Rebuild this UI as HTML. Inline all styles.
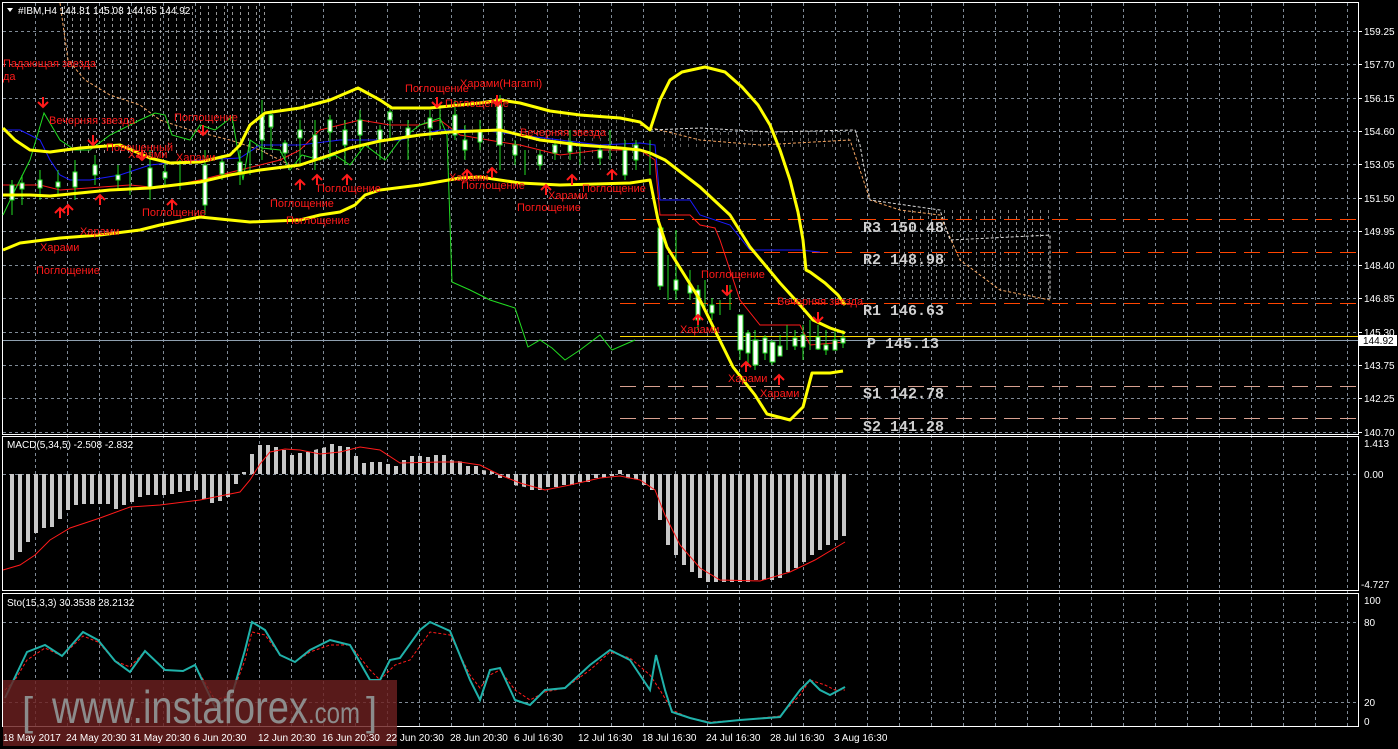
<!DOCTYPE html>
<html><head><meta charset="utf-8"><style>
html,body{margin:0;padding:0;background:#000;width:1398px;height:749px;overflow:hidden}
svg{display:block}
</style></head><body>
<svg width="1398" height="749" viewBox="0 0 1398 749" xmlns="http://www.w3.org/2000/svg" font-family="Liberation Sans, sans-serif">
<defs>
<pattern id="bars" x="10" y="0" width="8" height="749" patternUnits="userSpaceOnUse">
<rect x="0" y="0" width="4" height="749" fill="#c8c8c8"/>
</pattern>
<pattern id="vd" x="0" y="0" width="8" height="6" patternUnits="userSpaceOnUse">
<rect x="0" y="0" width="1" height="3" fill="#bdbdbd"/>
</pattern>
</defs>
<rect width="1398" height="749" fill="#000"/>
<g stroke="#7f8a96" stroke-width="1" stroke-dasharray="3,3">
<path d="M35.5 3V727M67.5 3V727M99.5 3V727M131.5 3V727M163.5 3V727M195.5 3V727M227.5 3V727M259.5 3V727M291.5 3V727M323.5 3V727M355.5 3V727M387.5 3V727M419.5 3V727M451.5 3V727M483.5 3V727M515.5 3V727M547.5 3V727M579.5 3V727M611.5 3V727M643.5 3V727M675.5 3V727M707.5 3V727M739.5 3V727M771.5 3V727M803.5 3V727M835.5 3V727M867.5 3V727M899.5 3V727M931.5 3V727M963.5 3V727M995.5 3V727M1027.5 3V727M1059.5 3V727M1091.5 3V727M1123.5 3V727M1155.5 3V727M1187.5 3V727M1219.5 3V727M1251.5 3V727M1283.5 3V727M1315.5 3V727M1347.5 3V727"/>
<path d="M3 31.5H1358M3 64.5H1358M3 98.5H1358M3 131.5H1358M3 164.5H1358M3 198.5H1358M3 231.5H1358M3 265.5H1358M3 298.5H1358M3 332.5H1358M3 365.5H1358M3 398.5H1358M3 432.5H1358"/>
<path d="M3 474.5H1358M3 622.5H1358M3 702.5H1358"/>
</g>
<g fill="none" stroke="#fff" stroke-width="1">
<rect x="2.5" y="2.5" width="1356" height="432"/>
<rect x="2.5" y="436.5" width="1356" height="154"/>
<rect x="2.5" y="593.5" width="1356" height="133"/>
</g>
<rect x="60" y="3" width="210" height="150" fill="url(#vd)" opacity="0.8"/>
<rect x="270" y="90" width="120" height="80" fill="url(#vd)" opacity="0.6"/>
<rect x="380" y="110" width="260" height="60" fill="url(#vd)" opacity="0.5"/>
<rect x="660" y="130" width="200" height="20" fill="url(#vd)" opacity="0.5"/>
<rect x="900" y="210" width="150" height="90" fill="url(#vd)" opacity="0.7"/>
<path d="M60 3 L68 60 L85 80 L110 95 L140 105 L160 120 L190 130 L230 140 L260 150 L300 170 M640 125 L700 140 L760 145 L850 140 L860 170 L870 200 L900 210 L940 215 L960 260 L1000 290 L1050 300" fill="none" stroke="#f4a460" stroke-width="1" stroke-dasharray="3,2"/>
<path d="M650 130 L700 128 L770 132 L855 130 L860 145 L870 200 L940 210 L950 240 L1050 235 L1050 300" fill="none" stroke="#ddd" stroke-width="1" stroke-dasharray="3,2"/>
<g stroke="#ff4500" stroke-width="1" stroke-dasharray="16,8">
<path d="M620 219.5H1358M620 252.5H1358M620 303.5H1358"/>
</g>
<g stroke="#d8a090" stroke-width="1" stroke-dasharray="16,8">
<path d="M620 386.5H1358M620 418.5H1358"/>
</g>
<path d="M620 336.5H1358" stroke="#ffd700" stroke-width="1"/>
<path d="M3 340.5H1358" stroke="#8fa0b0" stroke-width="1"/>
<g style="font-family:'Liberation Mono',monospace;font-size:15px;font-weight:bold" fill="#d0d0d0">
<text x="863" y="232">R3 150.48</text>
<text x="863" y="264">R2 148.98</text>
<text x="863" y="315">R1 146.63</text>
<text x="867" y="348">P 145.13</text>
<text x="863" y="398">S1 142.78</text>
<text x="863" y="431">S2 141.28</text>
</g>
<path d="M3 185 L40 185 L60 190 L130 185 L160 188 L200 180 L240 170 L280 160 L300 150 L320 130 L340 125 L360 120 L390 125 L420 125 L440 120 L460 135 L500 142 L520 145 L560 155 L600 150 L640 150 L655 160 L660 215 L690 215 L700 225 L715 228 L720 240 L730 270 L740 300 L760 325 L800 325 L810 345 L845 342" fill="none" stroke="#ff1a1a" stroke-width="1"/>
<path d="M3 130 L20 130 L40 140 L50 160 L60 175 L70 180 L90 180 L120 175 L150 165 L200 160 L240 158 L260 145 L300 145 L340 140 L400 140 L440 130 L480 130 L520 135 L560 140 L600 145 L640 143 L655 145 L660 200 L690 200 L700 215 L730 225 L750 250 L800 250 L820 252" fill="none" stroke="#1a1aff" stroke-width="1"/>
<path d="M3 215 L15 190 L30 160 L44 113 L60 140 L75 150 L90 150 L110 135 L130 125 L140 120 L155 113 L165 115 L172 135 L190 140 L200 125 L215 130 L232 117 L243 180 L250 140 L262 148 L280 150 L290 170 L302 155 L320 160 L335 155 L350 165 L365 145 L385 160 L400 140 L420 125 L440 118 L447 135 L452 282 L470 290 L490 300 L515 308 L528 347 L540 340 L552 348 L565 360 L580 350 L600 335 L612 350 L635 340" fill="none" stroke="#22dd22" stroke-width="1"/>
<g stroke="#22dd22" stroke-width="1" fill="#fff">
<path d="M12 180V215M22 175V205M40 170V200M58 170V195M75 160V200M95 155V185M118 165V190M130 165V195M150 150V200M165 160V185M180 160V190M205 150V215M222 155V180M240 150V185M250 140V175M262 100V160M271 110V150M285 140V160M300 120V165M315 120V170M330 115V160M345 120V165M360 110V150M380 125V160M390 105V140M408 120V160M430 110V140M440 105V130M455 100V140M465 125V160M480 120V150M500 95V170M515 140V165M525 150V175M540 150V170M555 140V160M570 130V160M580 145V165M600 145V165M610 130V160M625 140V180M636 140V170M650 140V175M660 225V290M668 255V300M676 230V300M690 270V300M698 285V330M705 280V310M712 298V320M720 300V315M730 285V310M740 315V360M748 330V365M755 330V370M765 335V360M772 340V365M780 335V355M787 325V350M795 330V350M803 325V360M810 320V350M818 325V350M826 330V355M835 330V350M843 330V348"/>
<rect x="10" y="185" width="4" height="15"/><rect x="20" y="183" width="4" height="6"/><rect x="38" y="180" width="4" height="8"/><rect x="56" y="182" width="4" height="5"/><rect x="73" y="172" width="4" height="15"/><rect x="93" y="165" width="4" height="10"/><rect x="116" y="175" width="4" height="5"/><rect x="148" y="168" width="4" height="20"/><rect x="163" y="172" width="4" height="6"/><rect x="203" y="165" width="4" height="40"/><rect x="220" y="162" width="4" height="12"/><rect x="238" y="162" width="4" height="10"/><rect x="260" y="115" width="4" height="25"/><rect x="269" y="115" width="4" height="12"/><rect x="283" y="143" width="4" height="10"/><rect x="298" y="130" width="4" height="8"/><rect x="313" y="135" width="4" height="25"/><rect x="328" y="120" width="4" height="12"/><rect x="343" y="130" width="4" height="15"/><rect x="358" y="120" width="4" height="15"/><rect x="378" y="130" width="4" height="10"/><rect x="388" y="112" width="4" height="8"/><rect x="406" y="128" width="4" height="8"/><rect x="428" y="118" width="4" height="10"/><rect x="453" y="115" width="4" height="20"/><rect x="463" y="140" width="4" height="10"/><rect x="478" y="130" width="4" height="12"/><rect x="497" y="105" width="5" height="40"/><rect x="513" y="145" width="4" height="10"/><rect x="538" y="155" width="4" height="10"/><rect x="553" y="145" width="4" height="8"/><rect x="568" y="142" width="4" height="10"/><rect x="598" y="150" width="4" height="8"/><rect x="623" y="150" width="4" height="25"/><rect x="634" y="145" width="4" height="15"/><rect x="658" y="228" width="5" height="58"/><rect x="674" y="280" width="4" height="10"/><rect x="688" y="285" width="4" height="8"/><rect x="696" y="290" width="4" height="30"/><rect x="710" y="305" width="4" height="8"/><rect x="738" y="315" width="5" height="35"/><rect x="746" y="333" width="4" height="20"/><rect x="753" y="340" width="5" height="25"/><rect x="763" y="338" width="4" height="15"/><rect x="770" y="342" width="5" height="20"/><rect x="778" y="346" width="4" height="10"/><rect x="793" y="338" width="4" height="8"/><rect x="801" y="335" width="4" height="12"/><rect x="816" y="337" width="4" height="12"/><rect x="824" y="345" width="4" height="5"/><rect x="833" y="340" width="4" height="10"/><rect x="841" y="338" width="4" height="5"/>
</g>
<g fill="none" stroke="#ffff00" stroke-width="3" stroke-linejoin="round">
<path d="M3 128 L15 140 L30 150 L50 152 L80 148 L120 145 L150 158 L170 163 L200 162 L230 155 L240 145 L250 125 L265 113 L300 108 L330 100 L358 88 L380 100 L392 108 L430 108 L480 103 L500 100 L520 103 L550 111 L580 115 L620 118 L640 122 L650 130 L660 100 L670 80 L682 72 L705 67 L725 72 L742 87 L758 105 L770 125 L780 150 L790 180 L798 212 L803 240 L806 270 L810 272 L825 283 L838 295 L845 305"/>
<path d="M650 153 L665 160 L700 187 L730 215 L750 247 L780 283 L800 305 L813 320 L830 328 L845 333"/>
<path d="M3 195 L30 195 L50 196 L80 193 L110 190 L150 188 L200 182 L230 175 L260 170 L300 165 L330 155 L350 148 L380 141 L420 135 L450 132 L500 130 L540 140 L580 145 L620 148 L640 150 L650 153"/>
<path d="M3 250 L20 243 L60 238 L100 235 L140 230 L160 225 L200 217 L250 222 L300 220 L320 215 L340 212 L355 205 L365 195 L380 190 L420 185 L460 178 L480 177 L520 183 L560 185 L630 183 L650 180 L658 220 L667 247 L700 300 L733 367 L755 395 L767 414 L790 420 L803 407 L812 373 L830 373 L843 371"/>
</g>
<g stroke="#ff1a1a" stroke-width="2" fill="none">
<path d="M43 97V107M38 102L43 107L48 102 M203 125V135M198 130L203 135L208 130 M437 97V107M432 102L437 107L442 102 M497 95V105M492 100L497 105L502 100 M727 285V295M722 290L727 295L732 290 M818 312V322M813 317L818 322L823 317 M142 150V160M137 155L142 160L147 155 M93 135V145M88 140L93 145L98 140"/>
<path d="M60 218V208M55 213L60 208L65 213 M68 215V205M63 210L68 205L73 210 M100 205V195M95 200L100 195L105 200 M172 210V200M167 205L172 200L177 205 M300 190V180M295 185L300 180L305 185 M317 185V175M312 180L317 175L322 180 M347 185V175M342 180L347 175L352 180 M467 180V170M462 175L467 170L472 175 M492 178V168M487 173L492 168L497 173 M546 195V185M541 190L546 185L551 190 M572 185V175M567 180L572 175L577 180 M612 180V170M607 175L612 170L617 175 M698 325V315M693 320L698 315L703 320 M746 372V362M741 367L746 362L751 367 M779 385V375M774 380L779 375L784 380"/>
</g>
<g font-size="11" fill="#ff1a1a">
<text x="3" y="67">Падающая звезда</text><text x="3" y="80">да</text>
<text x="49" y="124">Вечерняя звезда</text>
<text x="106" y="151">Повешенный</text>
<text x="128" y="158">Харами</text>
<text x="174" y="121">Поглощение</text>
<text x="176" y="161">Харами</text>
<text x="142" y="216">Поглощение</text>
<text x="80" y="235">Харами</text>
<text x="40" y="251">Харами</text>
<text x="36" y="274">Поглощение</text>
<text x="270" y="207">Поглощение</text>
<text x="286" y="224">Поглощение</text>
<text x="317" y="192">Поглощение</text>
<text x="405" y="92">Поглощение</text>
<text x="445" y="107">Поглощение</text>
<text x="460" y="87">Харами(Harami)</text>
<text x="449" y="181">Харами</text>
<text x="461" y="189">Поглощение</text>
<text x="520" y="136">Вечерняя звезда</text>
<text x="517" y="211">Поглощение</text>
<text x="548" y="199">Харами</text>
<text x="582" y="192">Поглощение</text>
<text x="701" y="278">Поглощение</text>
<text x="680" y="333">Харами</text>
<text x="777" y="305">Вечерняя звезда</text>
<text x="728" y="382">Харами</text>
<text x="760" y="397">Харами</text>
</g>
<path d="M7 8L13 8L10 12Z" fill="#fff"/>
<text x="18" y="14" font-size="10" fill="#fff">#IBM,H4  144.81 145.08 144.65 144.92</text>
<g font-size="10" fill="#fff">
<text x="1364" y="35">159.25</text><text x="1364" y="68">157.70</text><text x="1364" y="102">156.15</text><text x="1364" y="135">154.60</text><text x="1364" y="168">153.05</text><text x="1364" y="202">151.50</text><text x="1364" y="235">149.95</text><text x="1364" y="269">148.40</text><text x="1364" y="302">146.85</text><text x="1364" y="336">145.30</text><text x="1364" y="369">143.75</text><text x="1364" y="402">142.25</text><text x="1364" y="436">140.70</text>
<text x="1364" y="447">1.413</text><text x="1364" y="478">0.00</text><text x="1361" y="588">-4.727</text>
<text x="1364" y="604">100</text><text x="1364" y="626">80</text><text x="1364" y="706">20</text><text x="1364" y="725">0</text>
</g>
<rect x="1359" y="335" width="38" height="11" fill="#fff"/>
<text x="1363" y="344" font-size="10" fill="#000">144.92</text>
<path d="M1358 31.5h4M1358 64.5h4M1358 98.5h4M1358 131.5h4M1358 164.5h4M1358 198.5h4M1358 231.5h4M1358 265.5h4M1358 298.5h4M1358 332.5h4M1358 365.5h4M1358 398.5h4M1358 432.5h4" stroke="#fff"/>
<text x="7" y="448" font-size="10" fill="#fff">MACD(5,34,5) -2.508 -2.832</text>
<polygon fill="url(#bars)" points="10,474 10,560 18,560 18,552 26,552 26,542 34,542 34,533 42,533 42,528 50,528 50,527 58,527 58,519 66,519 66,510 74,510 74,505 82,505 82,504 114,504 114,509 122,509 122,505 130,505 130,502 138,502 138,497 146,497 146,495 170,495 170,494 178,494 178,492 186,492 186,491 194,491 194,490 202,490 202,499 210,499 210,503 218,503 218,501 226,501 226,497 234,497 234,484 242,484 242,472 250,472 250,454 258,454 258,445 274,445 274,447 282,447 282,450 290,450 290,455 298,455 298,453 306,453 306,452 314,452 314,450 330,446 330,444 338,444 338,446 346,446 346,447 354,447 354,456 362,456 362,463 370,463 370,462 386,462 386,464 394,464 394,466 402,466 402,460 410,460 410,456 426,456 426,457 434,457 434,455 450,455 450,460 466,462 466,466 482,466 482,470 498,472 498,478 514,478 514,485 530,488 530,490 546,490 546,487 562,487 562,485 578,485 578,482 594,482 594,478 610,478 610,476 618,476 618,470 626,470 626,478 642,480 642,485 650,485 650,490 658,490 658,520 666,520 666,545 674,545 674,555 682,555 682,565 690,565 690,572 698,572 698,578 706,578 706,582 754,582 754,580 778,580 778,578 786,578 786,572 794,572 794,568 802,568 802,562 810,562 810,555 818,555 818,550 826,550 826,545 834,545 834,540 842,540 842,536 847,536 847,474"/>
<path d="M3 570 L20 565 L35 555 L50 540 L70 528 L100 518 L130 507 L160 505 L200 500 L220 496 L240 492 L250 480 L260 464 L270 452 L285 449 L300 450 L320 454 L340 452 L360 447 L380 450 L400 463 L440 462 L460 462 L480 465 L500 475 L520 483 L545 490 L570 485 L600 478 L620 476 L640 480 L655 490 L665 515 L680 545 L700 568 L720 580 L760 581 L790 572 L815 560 L845 542" fill="none" stroke="#ff1a1a" stroke-width="1"/>
<text x="7" y="606" font-size="10" fill="#fff">Sto(15,3,3) 30.3538 28.2132</text>
<path d="M5 690 L15 680 L27 660 L45 648 L62 656 L83 636 L98 642 L115 661 L130 667 L145 651 L165 670 L183 671 L195 665 L215 700 L232 695 L245 660 L252 632 L265 635 L280 655 L295 662 L310 652 L330 645 L350 645 L370 670 L380 680 L395 665 L410 660 L430 632 L450 635 L470 675 L480 688 L490 675 L500 670 L515 690 L530 700 L545 692 L565 688 L590 670 L610 652 L630 658 L650 675 L660 690 L672 710 L690 718 L710 722 L740 720 L780 716 L800 695 L810 680 L825 685 L835 690 L845 690" fill="none" stroke="#ff1a1a" stroke-width="1" stroke-dasharray="3,2"/>
<path d="M5 698 L27 652 L45 645 L62 656 L83 632 L98 640 L115 661 L130 672 L145 651 L165 670 L183 671 L195 665 L215 707 L232 695 L245 650 L252 622 L265 630 L280 655 L295 662 L310 650 L330 640 L350 645 L370 680 L380 680 L390 660 L400 658 L420 630 L430 622 L450 631 L470 680 L480 700 L490 670 L500 668 L515 700 L530 705 L545 690 L565 688 L590 665 L610 650 L630 660 L650 690 L656 655 L665 690 L672 712 L690 718 L710 723 L740 720 L780 717 L800 690 L810 680 L820 690 L830 695 L845 687" fill="none" stroke="#20b2aa" stroke-width="2"/>
<rect x="3" y="680" width="394" height="66" fill="#6b2020" opacity="0.82"/>
<g fill="#8c8c8c">
<text x="22" y="725" font-size="40">[</text>
<text x="52" y="723" font-size="46" textLength="256" lengthAdjust="spacingAndGlyphs">www.instaforex</text>
<text x="308" y="723" font-size="30" textLength="52" lengthAdjust="spacingAndGlyphs">.com</text>
<text x="366" y="725" font-size="40">]</text>
</g>
<g font-size="10" fill="#fff">
<text x="3" y="741">18 May 2017</text><text x="66" y="741">24 May 20:30</text><text x="130" y="741">31 May 20:30</text><text x="194" y="741">6 Jun 20:30</text><text x="258" y="741">12 Jun 20:30</text><text x="322" y="741">16 Jun 20:30</text><text x="386" y="741">22 Jun 20:30</text><text x="450" y="741">28 Jun 20:30</text><text x="514" y="741">6 Jul 16:30</text><text x="578" y="741">12 Jul 16:30</text><text x="642" y="741">18 Jul 16:30</text><text x="706" y="741">24 Jul 16:30</text><text x="770" y="741">28 Jul 16:30</text><text x="834" y="741">3 Aug 16:30</text>
</g>
</svg>
</body></html>
